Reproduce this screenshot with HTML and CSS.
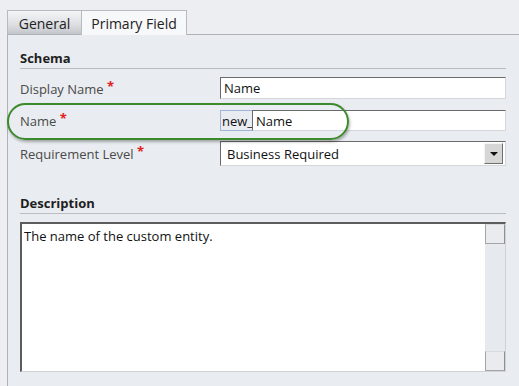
FILE: index.html
```html
<!DOCTYPE html>
<html lang="en">
<head>
  <meta charset="UTF-8" />
  <title>Entity - Primary Field</title>
  <link rel="stylesheet" href="styles.css">
</head>
<body>

  <div class="tabs">
    <div class="tab">General</div>
    <div class="tab active">Primary Field</div>
  </div>

  <div class="panel">
    <div class="section-title">Schema</div>

    <div class="row row-display">
      <div class="label">Display Name <span class="req">*</span></div>
      <div class="field input">Name</div>
    </div>

    <div class="row row-name">
      <div class="label">Name <span class="req">*</span></div>
      <div class="field split">
        <span class="prefix">new_</span>
        <span class="input">Name</span>
      </div>
    </div>

    <div class="row row-level">
      <div class="label">Requirement Level <span class="req">*</span></div>
      <div class="field select">
        <span class="select-text">Business Required</span>
        <span class="select-btn"><span class="caret"></span></span>
      </div>
    </div>

    <div class="section-title desc-title">Description</div>

    <div class="memo">
      <div class="memo-text">The name of the custom entity.</div>
      <div class="scrollbar">
        <div class="sb-btn"></div>
        <div class="sb-btn"></div>
      </div>
    </div>
  </div>

  <div class="highlight"></div>

</body>
</html>
```

FILE: styles.css
```css
body {
  margin: 0;
  font-family: 'Open Sans', 'Noto Sans', sans-serif;
  font-size: 12.5px;
  color: #3c3c3c;
  background: #eceef2;
  min-height: 386px;
}

.tabs {
  display: flex;
  padding: 10px 0 0 7px;
  height: 24px;
}

.tab {
  box-sizing: border-box;
  width: 75px;
  height: 24px;
  line-height: 25px;
  text-align: center;
  border: 1px solid #b6bac1;
  border-bottom: none;
  background: linear-gradient(to bottom, #f4f5f7, #dcdee2 60%, #c3c6cc);
  color: #222;
  font-size: 14px;
}

.tab.active {
  width: 106px;
  height: 25px;
  margin-left: -1px;
  background: #f7f8fa;
  position: relative;
  z-index: 1;
}

.panel {
  margin-left: 7px;
  border-left: 1px solid #aeb2b8;
  border-top: 1px solid #aeb2b8;
  background: #e9ecf0;
  padding: 0 13px 0 12px;
  height: 351px;
}

.section-title {
  font-weight: bold;
  color: #1e1e1e;
  font-size: 13px;
  line-height: 18px;
  margin-top: 14px;
  padding-bottom: 1px;
  border-bottom: 1px solid #b9bdc3;
}

.desc-title {
  margin-top: 28px;
}

.row {
  display: flex;
  align-items: center;
}

.row-display { margin-top: 8px; height: 22px; }
.row-name { margin-top: 11px; height: 21px; }
.row-level { margin-top: 10px; height: 25px; }

.label {
  width: 200px;
  color: #4a4a4a;
  font-size: 13px;
  padding-top: 1px;
}

.req {
  color: #e0201c;
  font-weight: bold;
  position: relative;
  top: -3px;
}

.field {
  flex: 1;
  height: 100%;
  box-sizing: border-box;
}

.input {
  background: #fff;
  border-top: 1px solid #6a6a6a;
  border-left: 1px solid #6a6a6a;
  border-right: 1px solid #d4d6da;
  border-bottom: 1px solid #d4d6da;
  padding-left: 3px;
  line-height: 21px;
  color: #111;
  font-size: 13px;
}

.split {
  display: flex;
}

.prefix {
  width: 32px;
  box-sizing: border-box;
  border: 1px solid #9fb4d6;
  border-right: none;
  line-height: 20px;
  padding-left: 1px;
  color: #111;
  font-size: 13px;
}

.split .input {
  flex: 1;
  line-height: 20px;
}

.select {
  display: flex;
  background: #fff;
  border-top: 1px solid #6a6a6a;
  border-left: 1px solid #6a6a6a;
  border-right: 1px solid #d4d6da;
  border-bottom: 1px solid #d4d6da;
}

.select-text {
  flex: 1;
  padding-left: 6px;
  line-height: 24px;
  color: #111;
  font-size: 13px;
}

.select-btn {
  width: 19px;
  margin: 1px 2px 1px 0;
  box-sizing: border-box;
  background: #d6d6d6;
  border-top: 1px solid #f4f4f4;
  border-left: 1px solid #f4f4f4;
  border-right: 1px solid #6e6e6e;
  border-bottom: 1px solid #6e6e6e;
  display: flex;
  align-items: center;
  justify-content: center;
}

.caret {
  width: 0;
  height: 0;
  border-left: 4px solid transparent;
  border-right: 4px solid transparent;
  border-top: 4px solid #111;
}

.memo {
  margin-top: 8px;
  height: 150px;
  box-sizing: border-box;
  display: flex;
  background: #fff;
  border-top: 2px solid #5c5c5c;
  border-left: 2px solid #5c5c5c;
  border-right: 1px solid #d0d2d6;
  border-bottom: 1px solid #d0d2d6;
}

.memo-text {
  flex: 1;
  padding: 3px 0 0 2px;
  line-height: 18px;
  color: #111;
  font-size: 13px;
}

.scrollbar {
  width: 20px;
  background: #e6e9ee;
  display: flex;
  flex-direction: column;
  justify-content: space-between;
}

.sb-btn {
  height: 20px;
  box-sizing: border-box;
  background: #e9ebef;
  border: 1px solid #a3a5aa;
  border-top-color: #d8dadd;
  border-right-color: #8e9095;
}

.highlight {
  position: absolute;
  left: 7px;
  top: 103px;
  width: 342px;
  height: 37px;
  box-sizing: border-box;
  border: 2px solid #3b8a2c;
  border-radius: 19px;
  box-shadow: 1px 2px 3px rgba(0, 0, 0, 0.3);
}
```
